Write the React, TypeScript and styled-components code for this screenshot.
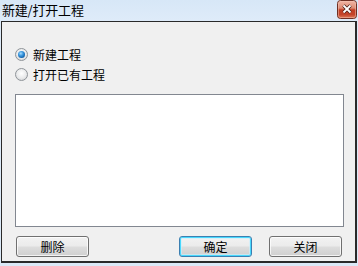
import React, { useState } from "react";
import styled, { createGlobalStyle, css } from "styled-components";

const Global = createGlobalStyle`
  html, body { margin: 0; padding: 0; background: #dbe9f7; }
  body { font-family: "Noto Sans CJK SC", "Noto Sans", sans-serif; }
  * { box-sizing: border-box; }
`;

const Window = styled.div`
  width: 358px;
  height: 266px;
  background: linear-gradient(#d7e7f7, #deebf9 20px, #dbe9f7);
  display: flex;
  flex-direction: column;
  overflow: hidden;
`;

const TitleBar = styled.div`
  height: 21px;
  display: flex;
  align-items: flex-start;
  justify-content: space-between;
  padding-left: 2px;
  padding-right: 1px;
`;

const Title = styled.span`
  font-size: 13px;
  line-height: 20px;
  color: #000;
  letter-spacing: -0.2px;
`;

const CloseSlot = styled.div`
  width: 20px;
  height: 19px;
  margin-top: 0;
  display: block;
  line-height: 0;
`;

const Panel = styled.div`
  margin-left: 1px;
  width: 356px;
  height: 242px;
  background: #f0f0f0;
  border-top: 1px solid #2a2a2a;
  border-left: 1px solid #2a2a2a;
  border-right: 2px solid #2a2a2a;
  border-bottom: 2px solid #2a2a2a;
  display: flex;
  flex-direction: column;
  padding: 22px 0 0 13px;
`;

const RadioRow = styled.label`
  height: 20px;
  display: flex;
  align-items: center;
  gap: 5px;
  font-size: 12px;
  color: #000;
  cursor: default;
`;

const RadioCircle = styled.span<{ $on: boolean }>`
  width: 13px;
  height: 13px;
  border-radius: 50%;
  border: 1px solid #8f9499;
  background: radial-gradient(circle at 50% 40%, #ffffff 0%, #e9eaeb 55%, #c9cbcd 100%);
  display: flex;
  align-items: center;
  justify-content: center;
  flex: none;
  ${(p) =>
    p.$on &&
    css`
      &::after {
        content: "";
        width: 7px;
        height: 7px;
        border-radius: 50%;
        background: radial-gradient(circle at 40% 35%, #a8ddff 0%, #3f9be0 35%, #0d5ea8 75%, #0a3f79 100%);
      }
    `}
`;

const ListBox = styled.div`
  margin-top: 10px;
  width: 329px;
  height: 133px;
  background: #fff;
  border: 1px solid #828790;
`;

const ButtonRow = styled.div`
  margin-top: 9px;
  margin-left: 1px;
  width: 326px;
  display: flex;
  align-items: center;
`;

const Spacer = styled.div`
  flex: 1;
`;

const Button = styled.button<{ $default?: boolean; $gap?: number }>`
  width: 73px;
  height: 21px;
  margin-left: ${(p) => p.$gap ?? 0}px;
  border: 1px solid #707070;
  border-radius: 3px;
  background: linear-gradient(#f2f2f2 0%, #ebebeb 48%, #dddddd 52%, #cfcfcf 100%);
  box-shadow: inset 0 0 0 1px rgba(255, 255, 255, 0.75);
  font-family: "Noto Sans CJK SC", "Noto Sans", sans-serif;
  font-size: 12px;
  line-height: 17px;
  color: #000;
  padding: 0;
  ${(p) =>
    p.$default &&
    css`
      border-color: #3c7fb1;
      box-shadow: inset 0 0 0 1px #48d8fd, inset 0 0 0 2px rgba(200, 240, 255, 0.6);
    `}
`;

const CloseIcon = () => (
  <svg width="20" height="19" viewBox="0 0 20 19">
    <defs>
      <linearGradient id="closeBg" x1="0" y1="0" x2="0" y2="1">
        <stop offset="0" stopColor="#f0b8a8" />
        <stop offset="0.42" stopColor="#de8c74" />
        <stop offset="0.52" stopColor="#c13e24" />
        <stop offset="0.78" stopColor="#c4442a" />
        <stop offset="1" stopColor="#e2805e" />
      </linearGradient>
    </defs>
    <rect x="0.5" y="0.5" width="19" height="18" rx="3" fill="url(#closeBg)" stroke="#6e3024" />
    <rect x="1.5" y="1.5" width="17" height="16" rx="2" fill="none" stroke="#f4c4b4" strokeOpacity="0.5" />
    <path d="M6.5 5.5 L13.5 12.5 M13.5 5.5 L6.5 12.5" stroke="#4a2019" strokeWidth="3.4" />
    <path d="M6.5 5.5 L13.5 12.5 M13.5 5.5 L6.5 12.5" stroke="#ffffff" strokeWidth="1.8" />
  </svg>
);

export default function App() {
  const [mode, setMode] = useState(0);
  return (
    <>
      <Global />
      <Window>
        <TitleBar>
          <Title>新建/打开工程</Title>
          <CloseSlot>
            <CloseIcon />
          </CloseSlot>
        </TitleBar>
        <Panel>
          <RadioRow onClick={() => setMode(0)}>
            <RadioCircle $on={mode === 0} />
            新建工程
          </RadioRow>
          <RadioRow onClick={() => setMode(1)}>
            <RadioCircle $on={mode === 1} />
            打开已有工程
          </RadioRow>
          <ListBox />
          <ButtonRow>
            <Button>删除</Button>
            <Spacer />
            <Button $default>确定</Button>
            <Button $gap={17}>关闭</Button>
          </ButtonRow>
        </Panel>
      </Window>
    </>
  );
}
